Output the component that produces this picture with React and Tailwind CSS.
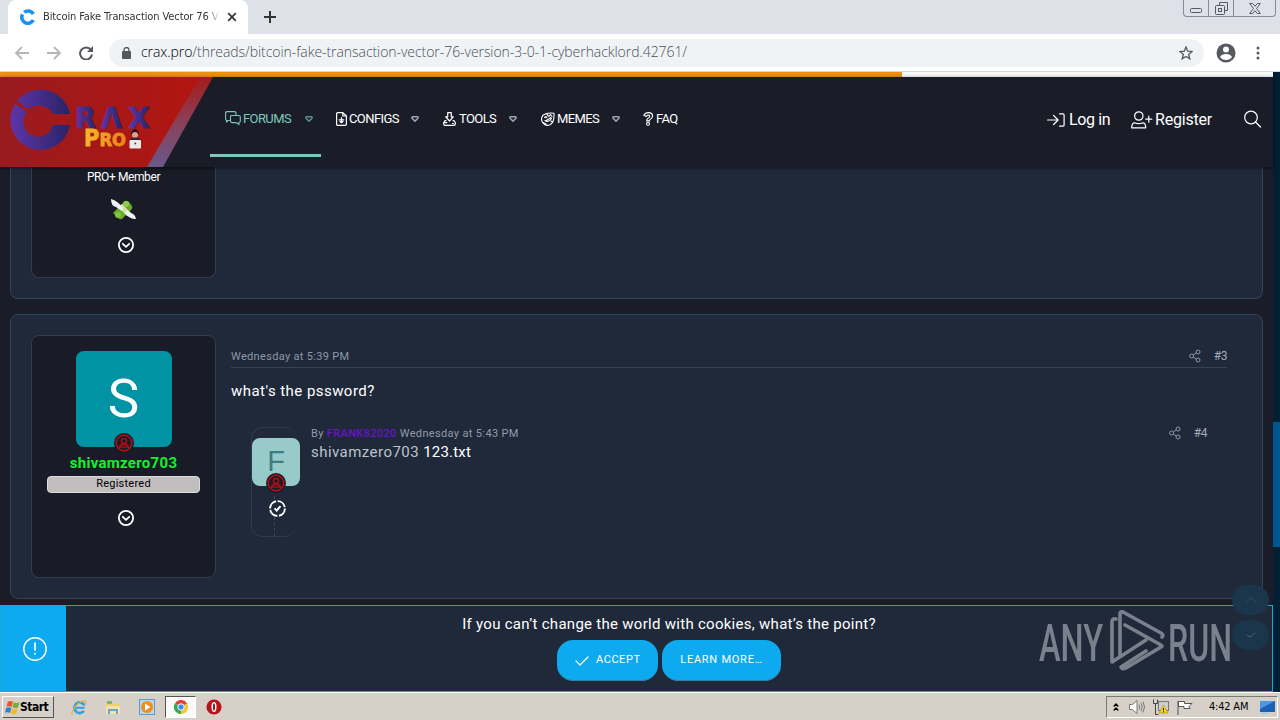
import clsx from 'clsx'

const DIN = "font-['Roboto','Liberation_Sans',sans-serif]"
const TAHOMA = "font-['DejaVu_Sans_Condensed','DejaVu_Sans',sans-serif]"

const STROKE = { fill: 'none', stroke: 'currentColor', strokeLinecap: 'round', strokeLinejoin: 'round' }

const NAV_ITEMS = [
  { label: 'FORUMS', icon: CommentsIcon, width: 'w-[111px]', iconBox: 'w-[18px]', text: 'w-[51px]', active: true },
  { label: 'CONFIGS', icon: FileIcon, width: 'w-[107px]', iconBox: 'w-[13px]', text: 'w-[51px]' },
  { label: 'TOOLS', icon: ToolIcon, width: 'w-[98px]', iconBox: 'w-4', text: 'w-[39px]' },
  { label: 'MEMES', icon: MemeIcon, width: 'w-[102px]', iconBox: 'w-4', text: 'w-[44px]' },
  { label: 'FAQ', icon: QuestionIcon, width: 'w-[70px]', iconBox: 'w-[13px]', last: true },
]

function CommentsIcon() {
  return (
    <svg width="16" height="15" viewBox="0 0 16 15" {...STROKE} strokeWidth="1.1">
      <path d="M4.5 9.5H3L1.5 11V9.2Q.6 9 .6 8V2q0-1.4 1.4-1.4h7.5Q11 .6 11 2v2.2" />
      <path d="M6.2 4.5h7.6q1.5 0 1.5 1.5v4q0 1.4-1.4 1.5v2.2l-2.5-2.1H7q-1.5 0-1.5-1.5V5.5q0-1 .7-1Z" />
    </svg>
  )
}

function FileIcon() {
  return (
    <svg width="11" height="14" viewBox="0 0 11 14" {...STROKE} strokeWidth="1.2">
      <path d="M1.8.6h5L10.400 4v8q0 1.300-1.300 1.300H1.800Q.6 13.300.6 12V1.800Q.6.6 1.800.6ZM6.800.8V4h3.400M5.500 5.500v4.500M3.200 7.800h4.600M4 9.500l1.500 1.200L7 9.500" />
    </svg>
  )
}

function ToolIcon() {
  return (
    <svg width="13" height="14" viewBox="0 0 13 14" {...STROKE} strokeWidth="1.2">
      <path d="M4.700.700h3.600v4.100h2L6.500 9 2.700 4.800h2ZM3 8.700H2L.7 10.500V12q0 1.300 1.300 1.300h9q1.300 0 1.300-1.300v-1.500L11 8.700h-1M.8 10.600h3M9.500 11.500h1" />
    </svg>
  )
}

function MemeIcon() {
  return (
    <svg width="14" height="14" viewBox="0 0 14 14" {...STROKE} strokeWidth="1.1">
      <path d="M13 1.200Q6 .2 2 3.200Q-.5 6.500 1.300 10Q4 14.500 8.500 13Q13.500 11 13 1.200Z" />
      <path d="M4 8.500Q7 11 10.500 6.500M4 8.500q2 .2 6-3M3.500 5.500l1.500-1 1 1.500M8 4.500l1.500-2 1.500 2M2 10.500 5 12M10 9l1.500 1M6 2.500 7.500 4" />
    </svg>
  )
}

function QuestionIcon() {
  return (
    <svg width="11" height="14" viewBox="0 0 11 14" {...STROKE} strokeWidth="1.1">
      <path d="M.8 3.300Q2.300.6 5.300.6q4.300 0 4.300 3.500Q9.600 6.300 7 7.600q-.5.300-.5 1.300H3.700Q3.500 6.600 6 5.400q1.500-1 0-2.100-1.500-.6-2.700 1.200Z" />
      <circle cx="5" cy="11.8" r="1.5" />
    </svg>
  )
}

function HeartCaret() {
  return (
    <svg width="8" height="6" viewBox="0 0 8 6" {...STROKE} strokeWidth="1.5">
      <path d="M1.500.8h5Q7.600 1.200 6.800 2.500L4 5.100 1.200 2.500Q.4 1.200 1.500.8Z" />
    </svg>
  )
}

function CircleCaret() {
  return (
    <svg width="16" height="16" viewBox="0 0 16 16" {...STROKE} strokeWidth="1.8">
      <circle cx="8" cy="8" r="7.1" />
      <path d="m4.800 6.800 3.200 3 3.200-3" />
    </svg>
  )
}

function ShareIcon() {
  return (
    <svg width="12" height="14" viewBox="0 0 12 14" fill="none" stroke="#8b96a5" strokeWidth="1">
      <circle cx="2.6" cy="7" r="2" />
      <circle cx="9" cy="3" r="2" />
      <circle cx="9" cy="11" r="2" />
      <path d="M4.300 6 7.300 4M4.300 8l3 2" />
    </svg>
  )
}

// Red "user" badge that sits on the lower edge of an avatar
function UserBadge({ className }) {
  return (
    <svg className={clsx('absolute', className)} width="20" height="20" viewBox="0 0 20 20" fill="none" stroke="#b00d1c">
      <circle cx="10" cy="10" r="10" fill="#1a1a22" stroke="none" />
      <circle cx="10" cy="10" r="7.8" strokeWidth="1.7" />
      <circle cx="10" cy="8" r="2.6" strokeWidth="1.5" />
      <path d="M5.300 15q.5-3.500 3-3.500h3.400q2.500 0 3 3.500M6 14h8" strokeWidth="1.4" />
    </svg>
  )
}

function TabStrip() {
  return (
    <div className="flex h-[34px] justify-between bg-[#dee1e8]">
      <div className="flex">
        <div className="mr-4 ml-2 flex w-60 items-center rounded-t-lg bg-white pl-3">
          <svg width="16" height="16" viewBox="0 0 16 16" fill="none" stroke="#1593ef" strokeWidth="3.6">
            <path d="M13.300 5A6 6 0 0 0 4.200 3.400M2.500 5.300A6 6 0 0 0 13.300 11" />
          </svg>
          <span className={clsx(TAHOMA, 'ml-[7px] w-[177px] overflow-hidden text-[11px] tracking-[-0.1px] whitespace-nowrap text-[#333] [mask-image:linear-gradient(to_right,#000_164px,transparent_177px)]')}>
            Bitcoin Fake Transaction Vector 76 V
          </span>
          <svg className="ml-[7px]" width="10" height="10" viewBox="0 0 10 10" stroke="#333" strokeWidth="1.700">
            <path d="m1.200 1.200 7.600 7.600m0-7.600L1.200 8.800" />
          </svg>
        </div>
        <svg className="mt-[11px]" width="12" height="12" viewBox="0 0 12 12" stroke="#333" strokeWidth="2">
          <path d="M6 0v12M0 6h12" />
        </svg>
      </div>
      <div className="mr-1 flex h-[17px] w-[93px] rounded-b border border-t-0 border-[#868b96] text-[#555b66]">
        <div className="flex w-[25px] items-end justify-center border-r border-[#868b96] pb-[3px]">
          <svg width="12" height="5" fill="none" stroke="currentColor"><rect x=".5" y=".5" width="11" height="4" rx="1" /></svg>
        </div>
        <div className="flex w-[25px] items-center justify-center border-r border-[#868b96]">
          <svg width="13" height="13" viewBox="0 0 13 13" fill="none" stroke="currentColor">
            <path d="M4.500 3.500v-3h8v8h-3" />
            <rect x=".5" y="3.5" width="9" height="9" rx="1" />
            <rect x="3.5" y="6.5" width="3" height="3" />
          </svg>
        </div>
        <div className="flex flex-1 items-center justify-center">
          <svg width="12" height="11" viewBox="0 0 12 11" fill="none" stroke="currentColor">
            <path d="M.7.500h3L6 3.300 8.300.500h3L7.600 5.500l3.700 5h-3L6 7.700l-2.300 2.800h-3l3.700-5Z" />
          </svg>
        </div>
      </div>
    </div>
  )
}

function AddressBar() {
  return (
    <div className="flex h-[38px] items-center border-b border-[#d9dbd8] bg-white">
      <svg className="ml-[14px]" width="16" height="14" viewBox="0 0 16 14" fill="none" stroke="#b5b7ba" strokeWidth="1.8">
        <path d="M15 7H2M8 1 2 7l6 6" />
      </svg>
      <svg className="ml-[17px]" width="16" height="14" viewBox="0 0 16 14" fill="none" stroke="#b5b7ba" strokeWidth="1.8">
        <path d="M0 7h13M7 1l6 6-6 6" />
      </svg>
      <svg className="ml-4" width="14" height="14" viewBox="0 0 14 14" fill="none" stroke="#55585c" strokeWidth="2">
        <path d="M12 4A6 6 0 1 0 13 8.500" />
        <path d="M14 0v6H8Z" fill="#55585c" stroke="none" />
      </svg>
      <div className="ml-4 flex h-7 w-[1095px] items-center rounded-full bg-[#f0f3f5] pr-[11px] pl-[13px]">
        <svg width="9" height="12" viewBox="0 0 9 12">
          <rect y="4" width="9" height="8" rx="1" fill="#55585c" />
          <path d="M2 5V3a2.500 2.500 0 0 1 5 0v2" fill="none" stroke="#55585c" strokeWidth="1.3" />
        </svg>
        <span className="-mt-0.5 ml-[10px] flex-1 font-['Open_Sans','Noto_Sans',sans-serif] text-[14px] font-light tracking-[-0.06px] whitespace-nowrap text-[#4a4f55]">
          <span className="text-black">crax.pro</span>/threads/bitcoin-fake-transaction-vector-76-version-3-0-1-cyberhacklord.42761/
        </span>
        <svg width="14" height="14" viewBox="0 0 14 14" fill="none" stroke="#55585c" strokeWidth="1.3">
          <path d="m7 1 1.700 4.200 4.400.300-3.400 2.900 1.100 4.400L7 10.400l-3.800 2.400 1.100-4.400L.9 5.500l4.400-.300Z" />
        </svg>
      </div>
      <svg className="ml-3" width="20" height="20" viewBox="0 0 20 20">
        <circle cx="10" cy="10" r="9.5" fill="#55585c" />
        <circle cx="10" cy="6.5" r="3" fill="#fff" />
        <path d="M4 14q1.500-3 6-3t6 3q-2 3-6 3t-6-3Z" fill="#fff" />
      </svg>
      <svg className="ml-5" width="4" height="14" viewBox="0 0 4 14" fill="#55585c">
        <circle cx="2" cy="2" r="1.5" />
        <circle cx="2" cy="7" r="1.5" />
        <circle cx="2" cy="12" r="1.5" />
      </svg>
    </div>
  )
}

function SiteLogo() {
  return (
    <svg className="shrink-0" width="210" height="90" viewBox="0 0 210 90" overflow="visible">
      <defs>
        <linearGradient id="red" x1="0" x2="1">
          <stop offset="0" stopColor="#991b1f" />
          <stop offset="1" stopColor="#b31510" />
        </linearGradient>
        <linearGradient id="stripe" x1="0" y1="0" x2="0" y2="1">
          <stop offset="0" stopColor="#a61a1b" />
          <stop offset=".5" stopColor="#8a4058" />
          <stop offset="1" stopColor="#68598a" />
        </linearGradient>
        <linearGradient id="violet" x1="0" y1="0" x2="1" y2="0">
          <stop offset="0" stopColor="#5e35a8" />
          <stop offset="1" stopColor="#292467" />
        </linearGradient>
        <linearGradient id="gold" x1="0" x2="1">
          <stop offset="0" stopColor="#f4b92c" />
          <stop offset="1" stopColor="#e98216" />
        </linearGradient>
      </defs>
      <path d="M0 0h205l-58 90H0Z" fill="url(#red)" />
      <path d="M200 0h13l-50 90h-16Z" fill="url(#stripe)" />
      <path d="M70 37A30 30 0 0 0 17 24l11 8a16 14 0 0 1 25 5ZM15 27a30 30 0 1 0 55 21H53A15 15 0 1 1 27 35Z" fill="url(#violet)" />
      <g
        className="font-['DejaVu_Sans',sans-serif] font-bold"
        fill="url(#violet)"
        stroke="url(#violet)"
        strokeWidth=".8"
        fontSize="28"
      >
        <text x="75" y="51" textLength="21" lengthAdjust="spacingAndGlyphs">R</text>
        <text x="101" y="51" textLength="21" lengthAdjust="spacingAndGlyphs">Λ</text>
        <text x="128" y="51" textLength="22" lengthAdjust="spacingAndGlyphs">X</text>
      </g>
      <text
        className="font-['DejaVu_Sans',sans-serif] font-bold"
        x="84"
        y="69"
        fill="url(#gold)"
        stroke="url(#gold)"
        strokeWidth=".8"
        fontSize="23"
        textLength="42"
        lengthAdjust="spacingAndGlyphs"
      >
        P<tspan fontSize="18">RO</tspan>
      </text>
      <path d="M131 57q4-10 8 0Z" fill="#18151c" />
      <circle cx="135" cy="58" r="3" fill="#d9a48b" />
      <path d="M129.500 70V62.500q5.500-4 11.500 0V70Z" fill="#2c2734" />
      <rect x="129.5" y="63" width="11.5" height="8.5" rx="1" fill="#eee9e9" />
      <circle cx="135.3" cy="66.5" r="1" fill="#444" />
    </svg>
  )
}

function Header() {
  return (
    <header className={clsx(DIN, 'z-10 flex h-[90px] shrink-0 bg-[#1a1d28] text-white shadow-[0_1px_4px_#0008]')}>
      <SiteLogo />
      <nav className="flex h-20">
        {NAV_ITEMS.map(({ label, icon: Icon, width, iconBox, text, active, last }) => (
          <div
            key={label}
            className={clsx(
              width,
              'flex items-center border-b-[3px] pt-[6px] pl-[15px]',
              active ? 'border-[#7ec8ba] text-[#7ec8ba]' : 'border-transparent',
            )}
          >
            <span className={clsx(iconBox, 'shrink-0')}><Icon /></span>
            <span className={clsx(text, 'text-[13px] leading-4 tracking-[-0.6px] whitespace-nowrap')}>{label}</span>
            {!last && (
              <span className={clsx('ml-[11px]', active ? 'text-[#5c9089]' : 'text-[#a0a5ad]')}><HeartCaret /></span>
            )}
          </div>
        ))}
      </nav>
      <div className="ml-auto flex h-[86px] items-center pr-3 text-[16px]">
        <svg width="18" height="14" viewBox="0 0 18 14" {...STROKE} strokeWidth="1.2">
          <path d="M.6 7h10.500M6.600 2.500 11.100 7l-4.500 4.500M12.500.8h3.300q1.300 0 1.300 1.300v9.800q0 1.300-1.300 1.300h-3.300" />
        </svg>
        <span className="ml-1 w-[41px] tracking-[-0.35px] whitespace-nowrap">Log in</span>
        <svg className="ml-[21px]" width="22" height="18" viewBox="0 0 22 18" {...STROKE} strokeWidth="1.2">
          <circle cx="7.8" cy="5" r="4.2" />
          <path d="M.7 16.800q0-5 3-5 4 1.800 8 0 3 0 3 5ZM14.800 8.200h6M17.800 5.200v6" />
        </svg>
        <span className="ml-0.5 w-[57px] tracking-[-0.2px] whitespace-nowrap">Register</span>
        <svg className="-mt-0.5 ml-8" width="17" height="18" viewBox="0 0 17 18" {...STROKE} strokeWidth="1.2">
          <circle cx="7" cy="7.5" r="6.3" />
          <path d="m11.500 12 5 5" />
        </svg>
      </div>
    </header>
  )
}

function MoneyWings() {
  return (
    <svg width="27" height="24" viewBox="0 0 27 24">
      <path d="m3 15 12-12q2-1 4 1l3 4q1 2-1 4L12 21q-2 1-4-1Z" fill="#66ac29" />
      <circle cx="16" cy="6" r="3" fill="#8dcc49" />
      <circle cx="8" cy="17" r="3" fill="#83c43f" />
      <path d="m8 9 4-3 9 9-4 3Z" fill="#d5dfa8" />
      <path d="M1 1q0 7 5 8l6 4 1-3Q8 3 1 1ZM15 15q4 6 11 6-1-5-5-6l-4-3Z" fill="#eef1f5" />
    </svg>
  )
}

function FirstPost() {
  return (
    <div className="h-[132px] shrink-0 rounded-b-lg border border-t-0 border-[#30445b] bg-[#1f293a] px-5">
      <div className="flex h-[111px] w-[185px] flex-col items-center rounded-b-lg border border-t-0 border-[#333e4d] bg-[#191c26] pt-[2px] text-white">
        <span className="text-[12px] leading-4 tracking-[-0.4px]">PRO+ Member</span>
        <div className="mt-[13px]"><MoneyWings /></div>
        <div className="mt-[15px] ml-1"><CircleCaret /></div>
      </div>
    </div>
  )
}

function ReplyRow() {
  return (
    <div className="mt-[26px] ml-5 flex">
      <div className="relative flex h-[110px] w-[45px] flex-col rounded-xl border border-r-0 border-[#2f3b4c] pt-[10px]">
        <div className="absolute top-[68px] left-[22px] h-10 border-l border-dashed border-[#3d4857]" />
        <div className="relative flex h-12 w-12 items-center justify-center rounded-lg bg-[#98caca] font-['Liberation_Sans',sans-serif] text-[29px] text-[#3b7e80]">
          F
          <UserBadge className="-bottom-[7px] left-[14px]" />
        </div>
        <svg className="relative mt-[14px] ml-[17px]" width="17" height="17" viewBox="0 0 17 17" fill="none" stroke="#fff" strokeWidth="1.9">
          <circle cx="8.5" cy="8.5" r="7.4" fill="#1f293a" strokeDasharray="10 1.6" />
          <path d="m5.500 8.300 2.200 2.200 3.800-4.300" />
        </svg>
      </div>
      <div className="ml-[15px] flex-1">
        <div className="text-[11px] leading-[13px] tracking-[0.35px] text-[#919ca9]">
          By <span className="font-medium tracking-[0.35px] text-[#6914c8]">FRANK82020</span> Wednesday at 5:43 PM
        </div>
        <div className="mt-[1px] text-[15px] leading-[22px] tracking-[0.45px] text-[#bec4cb]">
          shivamzero703 <span className="tracking-[0.2px] text-white">123.txt</span>
        </div>
      </div>
      <div className="mr-[20px] flex h-3 items-center text-[12px] text-[#a3acb8]">
        <ShareIcon />
        <span className="ml-[13px] tracking-[-0.4px]">#4</span>
      </div>
    </div>
  )
}

function SecondPost() {
  return (
    <div className="mt-[15px] flex h-[285px] shrink-0 rounded-lg border border-[#30445b] bg-[#1f293a] px-5 pt-5 text-white">
      <div className="flex h-[243px] w-[185px] shrink-0 flex-col items-center rounded-lg border border-[#333e4d] bg-[#191c26] px-[15px] pt-[15px]">
        <div className="relative flex size-24 items-center justify-center rounded-lg bg-[#0093a3] pt-0.5 font-['Roboto',sans-serif] text-[53px]">
          S
          <UserBadge className="-bottom-[6px] left-[38px]" />
        </div>
        <span className="mt-[6px] text-[15px] leading-5 font-bold tracking-[0.3px] text-[#12f22c]">shivamzero703</span>
        <span className="mt-[3px] h-[17px] w-full rounded border border-[#dcdcdc] bg-[#c0bebe] text-center text-[11px] leading-[13px] tracking-[0.25px] text-black">Registered</span>
        <div className="mt-[17px] ml-1"><CircleCaret /></div>
      </div>
      <div className="ml-[15px] flex-1 pt-[13px] pr-[15px]">
        <div className="flex h-5 items-start justify-between border-b border-[#374253]">
          <span className="pt-px text-[11px] leading-[15px] tracking-[0.32px] text-[#8d98a6]">Wednesday at 5:39 PM</span>
          <div className="flex h-[15px] items-center text-[12px] text-[#a3acb8]">
            <ShareIcon />
            <span className="ml-[13px] tracking-[-0.4px]">#3</span>
          </div>
        </div>
        <p className="mt-[13px] text-[15px] leading-5 tracking-[0.45px]">what's the pssword?</p>
        <ReplyRow />
      </div>
    </div>
  )
}

function AnyRunMark() {
  return (
    <svg className="absolute top-[4px] left-[1035px]" width="198" height="66" viewBox="0 0 198 66" fill="#858b95" opacity=".9">
      <g className="font-['Roboto',sans-serif] font-medium" fontSize="52">
        <text x="3" y="51" textLength="64" lengthAdjust="spacingAndGlyphs">ANY</text>
        <text x="132" y="51" textLength="64" lengthAdjust="spacingAndGlyphs">RUN</text>
      </g>
      <g fill="none" stroke="#858b95" strokeWidth="3.6" strokeLinejoin="round" strokeLinecap="round">
        <path d="M84 46V4q0-3 3-2l38 21q3 2 1 4M89 15l36 20q2 1 0 2L90 58q-4 2-5-1l25-16" />
        <path d="M80 9q-4-1-4 3v40l34-22" />
      </g>
    </svg>
  )
}

function CookieNotice() {
  return (
    <div className="relative mt-[6px] flex h-[87px] shrink-0 border border-[#1da5d5] bg-[#1f293a] text-white">
      <div className="flex w-[65px] items-center justify-center bg-[#0daaf0] pl-0.5">
        <svg width="24" height="24" viewBox="0 0 24 24" {...STROKE} strokeWidth="1.4">
          <circle cx="12" cy="12" r="11.2" />
          <path d="M12 6v7M12 16.500v.5" strokeWidth="1.700" />
        </svg>
      </div>
      <div className="flex flex-1 flex-col items-center pt-[8px]">
        <p className="text-[15px] leading-5 tracking-[0.28px] whitespace-nowrap">If you can’t change the world with cookies, what’s the point?</p>
        <div className="mt-[6px] flex gap-1 text-[11px] tracking-[0.55px]">
          <button className="flex h-[41px] w-[101px] items-center rounded-[16px] border-b border-[#3280ae] bg-[#0daaf0] pt-px pl-[18px]">
            <svg width="14" height="10" viewBox="0 0 14 10" {...STROKE} strokeWidth="1.2"><path d="m1 5 4 4 8-8" /></svg>
            <span className="ml-[7px]">ACCEPT</span>
          </button>
          <button className="h-[41px] w-[119px] rounded-[16px] border-b border-[#3280ae] bg-[#0daaf0] pt-px tracking-[0.75px] whitespace-nowrap">LEARN MORE…</button>
        </div>
      </div>
      <AnyRunMark />
      <div className="absolute -top-[21px] right-[3px] flex h-[30px] w-[37px] items-center justify-center rounded-full bg-[#1b354b] text-[#2c4a5e]">
        <svg width="12" height="6" {...STROKE}><path d="m1 5 5-4 5 4" /></svg>
      </div>
      <div className="absolute top-[14px] right-[3px] flex h-[30px] w-[37px] items-center justify-center rounded-full bg-[#1b354b] text-[#46657a]">
        <svg width="12" height="7" {...STROKE}><path d="m2 3 3 2 5-4" /></svg>
      </div>
    </div>
  )
}

function Taskbar() {
  return (
    <div className={clsx(TAHOMA, 'flex h-7 items-center justify-between border-t border-white bg-[#d6d0c8] pt-px text-black')}>
      <div className="flex items-center">
        <div className="ml-[2px] flex h-[22px] w-[52px] items-center border border-t-white border-r-[#555] border-b-[#555] border-l-white pl-[2px]">
          <svg width="15" height="15" viewBox="0 0 15 15">
            <path d="M3 1.500q2.500-1 5 .3L6.700 7Q4 5.500 1.500 6.600Z" fill="#e9582b" />
            <path d="M8.800 2.200q3 1.300 5.800.1L13 7.500q-3 1.200-5.500-.2Z" fill="#79ae3b" />
            <path d="M1.200 7.700q2.800-1 5.200.4L5 13Q2.500 11.500 0 12.600Z" fill="#2f83ce" />
            <path d="M7.200 8.500q3 1.300 5.600.1L11.200 14q-3 .9-5.500-.5Z" fill="#f1b92d" />
          </svg>
          <span className="text-[12px] font-bold tracking-[-0.5px]">Start</span>
        </div>
        <svg className="ml-[17px]" width="17" height="17" viewBox="0 0 17 17" fill="none">
          <path d="M13.500 6.500a5.300 5.300 0 1 0-.6 5.500" stroke="#2fa3e2" strokeWidth="2.8" />
          <path d="M4 8.800h9.500" stroke="#2fa3e2" strokeWidth="2" />
          <path d="M2 15Q-1 15 3.500 8.500 10 1 14.500 1.800q1.500 1-.5 4" stroke="#e3b442" strokeWidth="1.2" />
        </svg>
        <svg className="ml-[17px]" width="16" height="15" viewBox="0 0 16 15">
          <path d="M1 2h5l1 2h8v9H1Z" fill="#ecd07a" />
          <path d="M2 1h5v3H2Z" fill="#80b56e" />
          <path d="M1 6h14v8H1Z" fill="#f4e3a4" />
          <path d="M4 14v-4h8v4" fill="none" stroke="#62a8d8" strokeWidth="2" />
        </svg>
        <svg className="ml-[18px]" width="16" height="16" viewBox="0 0 16 16">
          <rect x=".5" y=".5" width="15" height="15" fill="#b6d7ee" stroke="#5a9bd0" />
          <circle cx="8" cy="8" r="6" fill="#ee8f1c" />
          <path d="m6 4.500 5.500 3.500L6 11.500Z" fill="#fff" />
        </svg>
        <div className="ml-[10px] flex h-[22px] w-[31px] items-center justify-center border border-t-[#555] border-r-white border-b-white border-l-[#555] bg-[#fbfaf8]">
          <svg width="14" height="14" viewBox="0 0 14 14">
            <path d="M7 7 .9 3.500a7 7 0 0 1 12.200 0Z" fill="#de4634" />
            <path d="M7 7l6.100-3.500A7 7 0 0 1 7 14Z" fill="#f6c62e" />
            <path d="M7 7v7A7 7 0 0 1 .9 3.500Z" fill="#36a853" />
            <circle cx="7" cy="7" r="3.2" fill="#4285f4" stroke="#fff" />
          </svg>
        </div>
        <svg className="ml-[10px]" width="16" height="16" viewBox="0 0 16 16">
          <circle cx="8" cy="8" r="7.6" fill="#b8151c" />
          <ellipse cx="8" cy="8" rx="2.5" ry="5" fill="#fff" />
          <ellipse cx="8" cy="8" rx="1" ry="3.8" fill="#8f1015" />
        </svg>
      </div>
      <div className="mr-[2px] flex h-[22px] w-[172px] items-center border border-t-[#7d7a75] border-r-white border-b-white border-l-[#7d7a75] pl-[6px]">
        <svg width="6" height="8" viewBox="0 0 6 8" fill="none" stroke="#000" strokeWidth="1.3"><path d="M.7 3.500 3 1l2.300 2.500M.7 7.500 3 5l2.300 2.500" /></svg>
        <svg className="ml-[10px]" width="16" height="14" viewBox="0 0 16 14" stroke="#777" fill="none">
          <path d="M.5 4.500h3L8 .500v13l-4.500-4h-3Z" fill="#fff" />
          <path d="M10 4.500q1.500 2.500 0 5M12 2.800q2.500 4.200 0 8.400M14 1.500q3 5.500 0 11" />
        </svg>
        <svg className="ml-2" width="16" height="16" viewBox="0 0 16 16">
          <rect x="5.5" y="2.5" width="10" height="9" fill="#c9ced2" stroke="#777" />
          <path d="M.5.500v4h4v-4M2.500 4.500v11h3" fill="none" stroke="#444" />
          <path d="m10.500 6 4.500 8H6Z" fill="#f6cf24" stroke="#b88a00" strokeWidth=".6" />
          <path d="M10.500 9v2.500M10.500 12.300v1" stroke="#222" />
        </svg>
        <svg className="ml-2" width="17" height="15" viewBox="0 0 17 15" fill="#fff" stroke="#555">
          <path d="M1 15V1" />
          <path d="M1.500 1.500h6v2h7.500l-3 3 1 2H7v-2H1.500Z" />
        </svg>
        <span className="ml-[15px] w-[42px] text-[11px] tracking-[-0.2px] whitespace-nowrap">4:42 AM</span>
        <svg className="ml-[9px]" width="15" height="13" viewBox="0 0 15 13">
          <rect width="15" height="11" fill="#1b62b5" />
          <path d="M0 0h15L0 8Z" fill="#4b99e3" />
          <path d="M1 11.500h7v1.500H1Z" fill="#9fc8ed" />
        </svg>
      </div>
    </div>
  )
}

export default function App() {
  return (
    <div className="flex h-[720px] w-[1280px] flex-col overflow-hidden">
      <TabStrip />
      <AddressBar />
      <div className="flex h-[620px]">
        <main className={clsx(DIN, 'flex w-[1273px] flex-col bg-[#1a1d28]')}>
          <div className="h-[5px] shrink-0 bg-[#fafafa]">
            <div className="h-full w-[902px] bg-[#ee9115]" />
          </div>
          <Header />
          <div className="mr-[10px] ml-[10px] flex flex-col">
            <FirstPost />
            <SecondPost />
          </div>
          <CookieNotice />
        </main>
        <div className="w-[7px] bg-[#021f33] pt-[350px]">
          <div className="h-[125px] bg-[#00568f]" />
        </div>
      </div>
      <Taskbar />
    </div>
  )
}
